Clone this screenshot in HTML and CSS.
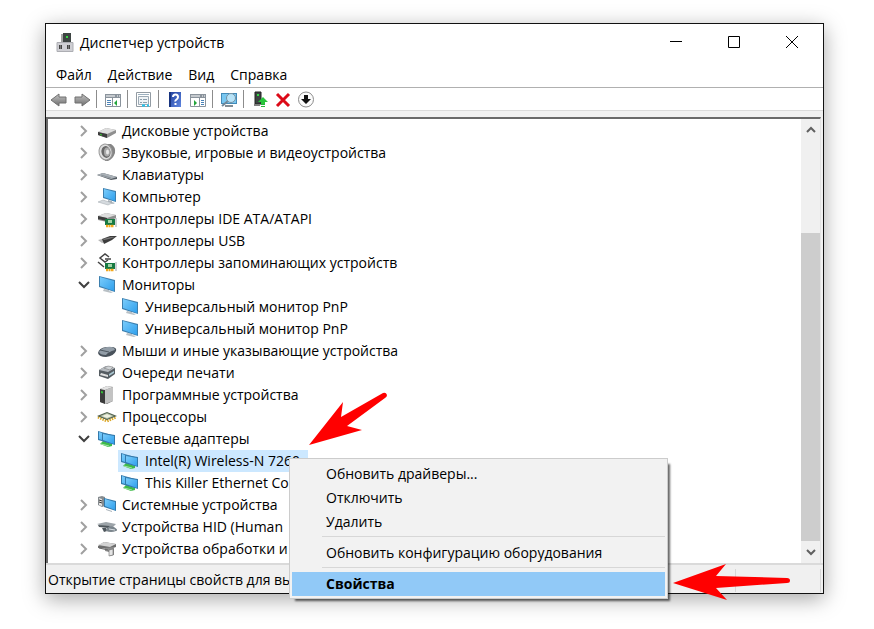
FILE: index.html
```html
<!DOCTYPE html>
<html lang="ru">
<head>
    <meta charset="UTF-8">
    <meta name="viewport" content="width=device-width, initial-scale=1.0">
    <title>Диспетчер устройств</title>
    <link rel="stylesheet" href="styles.css">
</head>
<body>

    <!-- Icons -->
    <svg class="sprite" aria-hidden="true">
        <defs>
            <linearGradient id="blue" x1="0" y1="0" x2="1" y2="1">
                <stop offset="0" stop-color="#7accfb"/>
                <stop offset="1" stop-color="#2f9fec"/>
            </linearGradient>
            <linearGradient id="steel" x1="0" y1="0" x2="0" y2="1">
                <stop offset="0" stop-color="#c4c4c4"/>
                <stop offset="1" stop-color="#6e6e6e"/>
            </linearGradient>
            <linearGradient id="help" x1="0" y1="0" x2="1" y2="1">
                <stop offset="0" stop-color="#1f3f9c"/>
                <stop offset="1" stop-color="#5f86e0"/>
            </linearGradient>
        </defs>
        <symbol id="i-right" viewBox="0 0 12 12"><path d="M3 1l5 5-5 5" fill="none" stroke="#a0a0a0" stroke-width="2"/></symbol>
        <symbol id="i-down" viewBox="0 0 12 12"><path d="M1 3l5 5 5-5" fill="none" stroke="#404040" stroke-width="2"/></symbol>
        <symbol id="i-disk" viewBox="0 0 20 20">
            <path d="M1 11l8-4 10 2v3l-9 5-9-3z" fill="#8f8f8f"/>
            <path d="M1 11l8-4 10 2-9 4z" fill="#dedede"/>
            <path d="M1 11l9 2v4l-9-3z" fill="#3d3d3d"/>
            <path d="M3 13l2 .6v1L3 14z" fill="#35d02f"/>
        </symbol>
        <symbol id="i-sound" viewBox="0 0 20 20">
            <path d="M8 1l6 0q5 3 4 9-2 6-7 8l-3 0z" fill="#858585"/>
            <ellipse cx="8.500" cy="9" rx="6.500" ry="8" transform="rotate(-12 8.500 9)" fill="#dedede" stroke="#999"/>
            <ellipse cx="9" cy="9" rx="4.500" ry="6" transform="rotate(-12 9 9)" fill="#686868"/>
            <ellipse cx="10" cy="9" rx="3" ry="4.500" fill="#a9a9a9"/>
            <ellipse cx="10.500" cy="9" rx="1.500" ry="2.500" fill="#e8e8e8"/>
        </symbol>
        <symbol id="i-keyboard" viewBox="0 0 20 20">
            <path d="M0 10l6-2 14 4v2l-6 1z" fill="#555c63"/>
            <path d="M0 10l6-2 14 4-6 2z" fill="#aab1b7"/>
            <path d="M4 10l10 3" stroke="#8a9299"/>
        </symbol>
        <symbol id="i-screen" viewBox="0 0 20 20">
            <path d="M7 14l5 1v1l4 1-2 1-8-2z" fill="#b9c0c5"/>
            <path d="M2 1l16 4v12L2 12z" fill="#3d7fae"/>
            <path d="M3 2l14 4v10L3 11z" fill="url(#blue)"/>
        </symbol>
        <symbol id="i-computer" viewBox="0 0 20 20">
            <path d="M6 1l13 3v11L6 11z" fill="#3d7fae"/>
            <path d="M7 2l11 3v9L7 10z" fill="url(#blue)"/>
            <path d="M11 13l4 1v1l3 1-2 1-5-2z" fill="#aab3ba"/>
            <path d="M1 15l5-2 9 3-4 2z" fill="#d5dade" stroke="#9ca5ab" stroke-width=".5"/>
        </symbol>
        <symbol id="i-card" viewBox="0 0 12 10">
            <path d="M0 1h10v6H0z" fill="#177a43"/>
            <path d="M11 0v9" stroke="#9aa3a8"/>
            <path d="M3 2h4v3H3z" fill="#9fd3a6"/>
            <path d="M1 8h8" stroke="#f3a81c" stroke-width="2.500" stroke-dasharray="2 .5"/>
        </symbol>
        <symbol id="i-ide" viewBox="0 0 20 20">
            <path d="M1 7l8-3 10 2v3l-9 4-9-2z" fill="#8f8f8f"/>
            <path d="M1 7l8-3 10 2-9 3z" fill="#dedede"/>
            <path d="M1 7l9 2v3l-9-2z" fill="#3d3d3d"/>
            <use href="#i-card" x="8" y="9" width="12" height="10"/>
        </symbol>
        <symbol id="i-usb" viewBox="0 0 20 20">
            <path d="M1 9l4-1 3 3-3 1z" fill="#b5b5b5"/>
            <path d="M5 8l8-3 7 0-5 4-8 4z" fill="#3c3c3c"/>
            <path d="M6 8l8-2 4 0-6 2-5 1z" fill="#777"/>
        </symbol>
        <symbol id="i-storage" viewBox="0 0 20 20">
            <path d="M12 4L8 1 3 5l5 4 3-2M1 9l6 5" fill="none" stroke="#444" stroke-width="1.500"/>
            <path d="M8 6h6" stroke="#444" stroke-width="1.500"/>
            <use href="#i-card" x="8" y="9" width="12" height="10"/>
        </symbol>
        <symbol id="i-mouse" viewBox="0 0 20 20">
            <path d="M1 12q1-5 8-6l7 0q4 1 3 4-2 5-10 6-7 0-8-4z" fill="#49525b"/>
            <path d="M2 11q2-4 8-5 7-1 8 3-7 2-9 5-6 0-7-3z" fill="#929da7"/>
            <path d="M3 9l9 2" stroke="#4e5861" fill="none"/>
        </symbol>
        <symbol id="i-printer" viewBox="0 0 20 20">
            <path d="M2 7l7-4 9 2v6l-7 5-9-3z" fill="#555c62"/>
            <path d="M2 7l7-4 9 2-7 4z" fill="#b6bbc0"/>
            <path d="M7 5l4-2 5 1-3 3z" fill="#d0d4d7" stroke="#777" stroke-width=".5"/>
            <path d="M4 10l7 2v2l-8-2z" fill="#e1e1e1"/>
            <path d="M12 11l5-3v2l-5 3z" fill="#a9c6d0"/>
        </symbol>
        <symbol id="i-software" viewBox="0 0 20 20">
            <path d="M3 4l7-3 6 1v14l-6 3-7-2z" fill="#777"/>
            <path d="M3 4l5 1v14l-5-2z" fill="#3b3b3b"/>
            <path d="M3 4l7-3 6 1-8 3z" fill="#e4e4e4"/>
            <path d="M8 5l8-3v14l-8 3z" fill="#c3c3c3"/>
            <path d="M4 6l2 .5v2L4 8z" fill="#32bd35"/>
        </symbol>
        <symbol id="i-cpu" viewBox="0 0 20 20">
            <path d="M1 10l9 4 9-4" fill="none" stroke="#dca827" stroke-width="3" stroke-dasharray="1.500 1"/>
            <path d="M0 9l10-4 10 4-10 4z" fill="#53624f"/>
            <path d="M3 9l7-3 7 3-7 3z" fill="#aab8a0"/>
            <path d="M5 9l5-2 5 2-5 2z" fill="#eef0df"/>
        </symbol>
        <symbol id="i-network" viewBox="0 0 20 20">
            <path d="M3 15l3-3 9 3v2l-4 1z" fill="#3eba4a"/>
            <path d="M4 15l8 2" stroke="#a5e4a4"/>
            <path d="M1 2l14 4v9L1 11z" fill="#3379ab"/>
            <path d="M2 3l12 4v7L2 10z" fill="url(#blue)"/>
            <path d="M5 4l13 2v10L5 12z" fill="#3379ab"/>
            <path d="M6 5l11 2v8L6 11z" fill="url(#blue)"/>
        </symbol>
        <symbol id="i-system" viewBox="0 0 20 20">
            <path d="M1 2l4-1 3 1v9l-3 1-4-2z" fill="#858b8f"/>
            <path d="M2 3l3 1v7l-3-1z" fill="#e3e3e3"/>
            <path d="M2 5l3 1M2 7l3 1" stroke="#333"/>
            <path d="M7 3l12 3v10L7 12z" fill="#3379ab"/>
            <path d="M8 4l10 3v8L8 11z" fill="url(#blue)"/>
            <path d="M9 14l6 2v1l-6-2z" fill="#aab3ba"/>
        </symbol>
        <symbol id="i-hid" viewBox="0 0 20 20">
            <path d="M0 7l9-2 10 2-3 3-9 0z" fill="#9da4a9"/>
            <path d="M1 8l12 1-2 2-9-1zM5 11l2 4 3-1-1-3z" fill="#4e565c"/>
            <path d="M9 12q3-4 8-2 5 3 2 4-5 2-10 0z" fill="#7b858c"/>
            <path d="M12 12l6 1" stroke="#d9dfe3"/>
        </symbol>
        <symbol id="i-imaging" viewBox="0 0 20 20">
            <path d="M1 7l6-4 12 2v3l-6 2-12-1z" fill="#6d6d6d"/>
            <path d="M1 6l6-3 12 2-6 3z" fill="#d3d3d3"/>
            <path d="M8 9l9-1v8l-4 1-1-4-4-1z" fill="#8c8c8c"/>
            <path d="M12 11l4-1v6l-4 1z" fill="#e5e5e5" stroke="#555" stroke-width=".5"/>
            <path d="M2 9l9 2" stroke="#666"/>
        </symbol>
        <symbol id="i-app" viewBox="0 0 20 20">
            <path d="M6 1h3v10H6z" fill="#a5a5a5"/>
            <path d="M8 0h8v10H8z" fill="#3d4442"/>
            <path d="M11 3h2v2h-2z" fill="#36d845"/>
            <path d="M2 9.500h16v9H2z" fill="#cfcfd4" stroke="#adaeb3"/>
            <path d="M4 12h3v4H4zM12 12h3v4h-3z" fill="#444"/>
            <path d="M5 12h1v4H5zM13 12h1v4h-1z" fill="#777"/>
        </symbol>
        <symbol id="t-back" viewBox="0 0 18 18"><path d="M1 10l8-6v3h7v6H9v3z" fill="url(#steel)" stroke="#707070"/></symbol>
        <symbol id="t-forward" viewBox="0 0 18 18"><path d="M17 10L9 4v3H2v6h7v3z" fill="url(#steel)" stroke="#707070"/></symbol>
        <symbol id="t-tree" viewBox="0 0 18 18">
            <path d="M1.500 4.500h15v12h-15z" fill="#fff" stroke="#8a939c"/>
            <path d="M1 4h16v4H1z" fill="#8a939c"/>
            <path d="M2 6h9M13 6h1M15 6h1" stroke="#fff"/>
            <path d="M8.500 8v8" stroke="#8a939c"/>
            <path d="M3 10.500h4M3 12.500h4M3 14.500h4" stroke="#4b83b8"/>
            <path d="M13 10v6l-3-3z" fill="#24a43c"/>
        </symbol>
        <symbol id="t-props" viewBox="0 0 18 18">
            <path d="M1.500 2.500h14v14h-14z" fill="#fff" stroke="#929ba3"/>
            <path d="M3 4.500h11" stroke="#9db1c0"/>
            <path d="M3.500 6.500h10v8h-10z" fill="#eff3f6" stroke="#9daab5"/>
            <path d="M5 9.500h2M8 9.500h4M5 12.500h2M8 12.500h4" stroke="#8b9dab"/>
            <path d="M7 15.500h3M12 15.500h2" stroke="#22c5ef" stroke-width="2"/>
        </symbol>
        <symbol id="t-help" viewBox="0 0 18 18">
            <path d="M3 2h12v15H3z" fill="url(#help)"/>
            <path d="M3 2h2v15H3z" fill="#183480"/>
            <path d="M7 7q0-2.500 2.500-2.500T12 7q0 1.500-1.500 2.500t-1 2M9.500 13v2" fill="none" stroke="#fff" stroke-width="2"/>
        </symbol>
        <symbol id="t-actions" viewBox="0 0 18 18">
            <path d="M1.500 4.500h15v12h-15z" fill="#fff" stroke="#8a939c"/>
            <path d="M1 4h16v4H1z" fill="#8a939c"/>
            <path d="M2 6h9M13 6h1M15 6h1" stroke="#fff"/>
            <path d="M10.500 8v8" stroke="#8a939c"/>
            <path d="M12 10.500h3M12 12.500h3M12 14.500h3" stroke="#4b83b8"/>
            <path d="M5 10v6l3-3z" fill="#24a43c"/>
        </symbol>
        <symbol id="t-scan" viewBox="0 0 18 18">
            <path d="M1 3h16v11H1z" fill="#448bb8"/>
            <path d="M2 4h14v9H2z" fill="#78c7f1"/>
            <path d="M5 16h8" stroke="#848d94" stroke-width="2"/>
            <path d="M8 11l-6 5" stroke="#718798" stroke-width="2"/>
            <circle cx="11" cy="8" r="4.500" fill="#b7e3f8" stroke="#7690a1"/>
        </symbol>
        <symbol id="t-update" viewBox="0 0 18 18">
            <path d="M4 2h6v12H4z" fill="#3d4442" stroke="#222"/>
            <path d="M6 4h2v2H6z" fill="#36d845"/>
            <path d="M3 15h6" stroke="#808080" stroke-width="2"/>
            <path d="M12 7l5 5h-3v2h-4v-2H7z" fill="#27c53b"/>
            <path d="M10 14.500h4M10 16.500h4" stroke="#27b53b"/>
        </symbol>
        <symbol id="t-remove" viewBox="0 0 18 18"><path d="M3 4l12 12M15 4L3 16" stroke="#dc0a18" stroke-width="3"/></symbol>
        <symbol id="t-disable" viewBox="0 0 18 18">
            <circle cx="9" cy="9.500" r="7.500" fill="#fbfbfb" stroke="#8c8c8c"/>
            <path d="M7 5h4v4h3l-5 5-5-5h3z" fill="#111"/>
        </symbol>
    </svg>

    <main class="window">
        <header class="title-bar">
            <svg class="app-icon"><use href="#i-app"/></svg>
            <h1>Диспетчер устройств</h1>
            <button class="caption-button" aria-label="Свернуть"><svg viewBox="0 0 12 12"><path d="M0 5.500h12"/></svg></button>
            <button class="caption-button" aria-label="Развернуть"><svg viewBox="0 0 12 12"><path d="M.5 .5h11v11H.5z"/></svg></button>
            <button class="caption-button" aria-label="Закрыть"><svg viewBox="0 0 12 12"><path d="M0 0l12 12M12 0L0 12"/></svg></button>
        </header>

        <nav class="menu-bar">
            <button>Файл</button>
            <button>Действие</button>
            <button>Вид</button>
            <button>Справка</button>
        </nav>

        <div class="toolbar">
            <button aria-label="Назад"><svg><use href="#t-back"/></svg></button>
            <button aria-label="Вперед"><svg><use href="#t-forward"/></svg></button>
            <span class="divider"></span>
            <button aria-label="Дерево консоли"><svg><use href="#t-tree"/></svg></button>
            <span class="divider"></span>
            <button aria-label="Свойства"><svg><use href="#t-props"/></svg></button>
            <span class="divider"></span>
            <button aria-label="Справка"><svg><use href="#t-help"/></svg></button>
            <button aria-label="Панель действий"><svg><use href="#t-actions"/></svg></button>
            <span class="divider"></span>
            <button aria-label="Обновить конфигурацию"><svg><use href="#t-scan"/></svg></button>
            <span class="divider"></span>
            <button aria-label="Обновить драйверы"><svg><use href="#t-update"/></svg></button>
            <button aria-label="Удалить"><svg><use href="#t-remove"/></svg></button>
            <button aria-label="Отключить"><svg><use href="#t-disable"/></svg></button>
        </div>

        <section class="content">
            <ul class="tree">
                <li><button class="toggle" aria-label="Развернуть"><svg><use href="#i-right"/></svg></button><span class="node"><svg><use href="#i-disk"/></svg>Дисковые устройства</span></li>
                <li><button class="toggle" aria-label="Развернуть"><svg><use href="#i-right"/></svg></button><span class="node"><svg><use href="#i-sound"/></svg>Звуковые, игровые и видеоустройства</span></li>
                <li><button class="toggle" aria-label="Развернуть"><svg><use href="#i-right"/></svg></button><span class="node"><svg><use href="#i-keyboard"/></svg>Клавиатуры</span></li>
                <li><button class="toggle" aria-label="Развернуть"><svg><use href="#i-right"/></svg></button><span class="node"><svg><use href="#i-computer"/></svg>Компьютер</span></li>
                <li><button class="toggle" aria-label="Развернуть"><svg><use href="#i-right"/></svg></button><span class="node"><svg><use href="#i-ide"/></svg>Контроллеры IDE ATA/ATAPI</span></li>
                <li><button class="toggle" aria-label="Развернуть"><svg><use href="#i-right"/></svg></button><span class="node"><svg><use href="#i-usb"/></svg>Контроллеры USB</span></li>
                <li><button class="toggle" aria-label="Развернуть"><svg><use href="#i-right"/></svg></button><span class="node"><svg><use href="#i-storage"/></svg>Контроллеры запоминающих устройств</span></li>
                <li><button class="toggle" aria-label="Свернуть"><svg><use href="#i-down"/></svg></button><span class="node"><svg><use href="#i-screen"/></svg>Мониторы</span></li>
                <li class="child"><span class="node"><svg><use href="#i-screen"/></svg>Универсальный монитор PnP</span></li>
                <li class="child"><span class="node"><svg><use href="#i-screen"/></svg>Универсальный монитор PnP</span></li>
                <li><button class="toggle" aria-label="Развернуть"><svg><use href="#i-right"/></svg></button><span class="node"><svg><use href="#i-mouse"/></svg>Мыши и иные указывающие устройства</span></li>
                <li><button class="toggle" aria-label="Развернуть"><svg><use href="#i-right"/></svg></button><span class="node"><svg><use href="#i-printer"/></svg>Очереди печати</span></li>
                <li><button class="toggle" aria-label="Развернуть"><svg><use href="#i-right"/></svg></button><span class="node"><svg><use href="#i-software"/></svg>Программные устройства</span></li>
                <li><button class="toggle" aria-label="Развернуть"><svg><use href="#i-right"/></svg></button><span class="node"><svg><use href="#i-cpu"/></svg>Процессоры</span></li>
                <li><button class="toggle" aria-label="Свернуть"><svg><use href="#i-down"/></svg></button><span class="node"><svg><use href="#i-network"/></svg>Сетевые адаптеры</span></li>
                <li class="child"><span class="node selected"><svg><use href="#i-network"/></svg>Intel(R) Wireless-N 7260</span></li>
                <li class="child"><span class="node"><svg><use href="#i-network"/></svg>This Killer Ethernet Co</span></li>
                <li><button class="toggle" aria-label="Развернуть"><svg><use href="#i-right"/></svg></button><span class="node"><svg><use href="#i-system"/></svg>Системные устройства</span></li>
                <li><button class="toggle" aria-label="Развернуть"><svg><use href="#i-right"/></svg></button><span class="node"><svg><use href="#i-hid"/></svg>Устройства HID (Human</span></li>
                <li><button class="toggle" aria-label="Развернуть"><svg><use href="#i-right"/></svg></button><span class="node"><svg><use href="#i-imaging"/></svg>Устройства обработки и</span></li>
            </ul>
            <div class="scrollbar">
                <button aria-label="Вверх"><svg viewBox="0 0 10 10"><path d="M1 7l4-4 4 4"/></svg></button>
                <div class="track"><div class="thumb"></div></div>
                <button aria-label="Вниз"><svg viewBox="0 0 10 10"><path d="M1 3l4 4 4-4"/></svg></button>
            </div>
        </section>

        <footer class="status-bar">
            <span class="status-text">Открытие страницы свойств для вы</span>
            <span class="status-cell"></span>
        </footer>

        <div class="context-menu">
            <button>Обновить драйверы...</button>
            <button>Отключить</button>
            <button>Удалить</button>
            <hr>
            <button>Обновить конфигурацию оборудования</button>
            <hr>
            <button class="active">Свойства</button>
        </div>

        <svg class="arrow arrow-device" viewBox="0 0 80 54"><path d="M0 53L34 10l-2 15L74 1q3-1 4 2 0 2-2 3L38 34l15 4z"/></svg>
        <svg class="arrow arrow-menu" viewBox="0 0 118 36"><path d="M0 19L53 0 43 12l71 2q3 0 3 2.500t-3 2.500L43 24l11 12z"/></svg>
    </main>

</body>
</html>
```
FILE: styles.css
```css
* {
    box-sizing: border-box;
}

body {
    margin: 0;
    padding: 23px 50px 35px 45px;
    min-height: 100vh;
    background-color: #fff;
    color: #000;
    font-family: "Open Sans", "Noto Sans", sans-serif;
    font-size: 14px;
    line-height: 22px;
    display: flex;
}

button {
    padding: 0;
    border: none;
    background: none;
    font: inherit;
    color: inherit;
}

svg {
    display: block;
    flex: none;
}

.sprite {
    position: absolute;
    width: 0;
    height: 0;
}

.window {
    position: relative;
    flex: 1;
    min-width: 0;
    display: flex;
    flex-direction: column;
    border: 1px solid #111;
    background-color: #fff;
    box-shadow: 0 5px 20px rgba(0, 0, 0, 0.35);
}

/* Title bar */
.title-bar {
    display: flex;
    align-items: center;
    height: 38px;
    padding: 0 2px 0 9px;
}

.app-icon {
    width: 20px;
    height: 20px;
    margin-right: 5px;
}

.title-bar h1 {
    flex: 1;
    margin: 0;
    font-size: 14px;
    font-weight: 400;
}

.caption-button {
    width: 58px;
    height: 36px;
    padding-bottom: 2px;
    display: flex;
    align-items: center;
    justify-content: center;
}

.caption-button svg {
    width: 12px;
    height: 12px;
    fill: none;
    stroke: #000;
}

/* Menu and toolbar */
.menu-bar {
    display: flex;
    gap: 16px;
    height: 26px;
    padding: 0 10px;
    border-bottom: 1px solid #b0b0b0;
}

.toolbar {
    display: flex;
    align-items: center;
    gap: 5px;
    height: 23px;
    padding: 0 4px;
    border-bottom: 1px solid #dadada;
}

.toolbar svg {
    width: 18px;
    height: 18px;
}

.divider {
    width: 1px;
    height: 18px;
    margin-right: 2px;
    background-color: #8c8c8c;
}

/* Device tree */
.content {
    flex: 1;
    display: flex;
    border-top: 6px solid #f0f0f0;
    border-right: 2px solid #f0f0f0;
}

.tree {
    flex: 1;
    margin: 0;
    padding: 1px 0 3px 30px;
    border-top: 2px solid #696969;
    border-left: 2px solid #696969;
    list-style: none;
}

.tree li {
    display: flex;
    align-items: center;
    height: 22px;
    white-space: nowrap;
}

.toggle svg {
    width: 12px;
    height: 12px;
}

.node {
    display: flex;
    align-items: center;
    gap: 5px;
    margin-left: 5px;
    padding: 0 8px 0 2px;
}

.node svg {
    width: 20px;
    height: 20px;
}

.child {
    padding-left: 35px;
}

.selected {
    background-color: #cce8ff;
}

.scrollbar {
    width: 20px;
    display: flex;
    flex-direction: column;
    border-top: 2px solid #696969;
    border-right: 1px solid #e3e3e3;
    background-color: #f0f0f0;
}

.scrollbar button {
    height: 22px;
    display: flex;
    align-items: center;
    justify-content: center;
}

.scrollbar svg {
    width: 10px;
    height: 10px;
    fill: none;
    stroke: #606060;
    stroke-width: 2;
}

.track {
    flex: 1;
    display: flex;
    align-items: flex-end;
}

.thumb {
    width: 100%;
    height: 77%;
    background-color: #cdcdcd;
}

/* Status bar */
.status-bar {
    display: flex;
    height: 30px;
    padding: 4px 2px 1px;
    border-top: 2px solid #dadada;
    background-color: #f0f0f0;
}

.status-text {
    flex: 1;
    white-space: nowrap;
}

.status-cell {
    width: 86px;
    border-left: 1px solid #d7d7d7;
    border-right: 1px solid #d7d7d7;
}

/* Context menu */
.context-menu {
    position: absolute;
    top: 434px;
    left: 243px;
    width: 379px;
    padding: 3px 2px 2px;
    border: 1px solid #ccc;
    background-color: #f2f2f2;
    box-shadow: 4px 4px 2px -2px rgba(0, 0, 0, 0.6);
}

.context-menu button {
    display: block;
    width: 100%;
    height: 24px;
    padding-left: 34px;
    text-align: left;
}

.context-menu hr {
    height: 1px;
    margin: 2px 0 4px 30px;
    border: none;
    background-color: #d7d7d7;
}

.context-menu .active {
    background-color: #91c9f7;
    font-weight: 700;
}

/* Pointers */
.arrow {
    position: absolute;
    fill: #f00;
}

.arrow-device {
    top: 368px;
    left: 263px;
    width: 80px;
    height: 54px;
}

.arrow-menu {
    top: 540px;
    left: 627px;
    width: 118px;
    height: 36px;
}
```
